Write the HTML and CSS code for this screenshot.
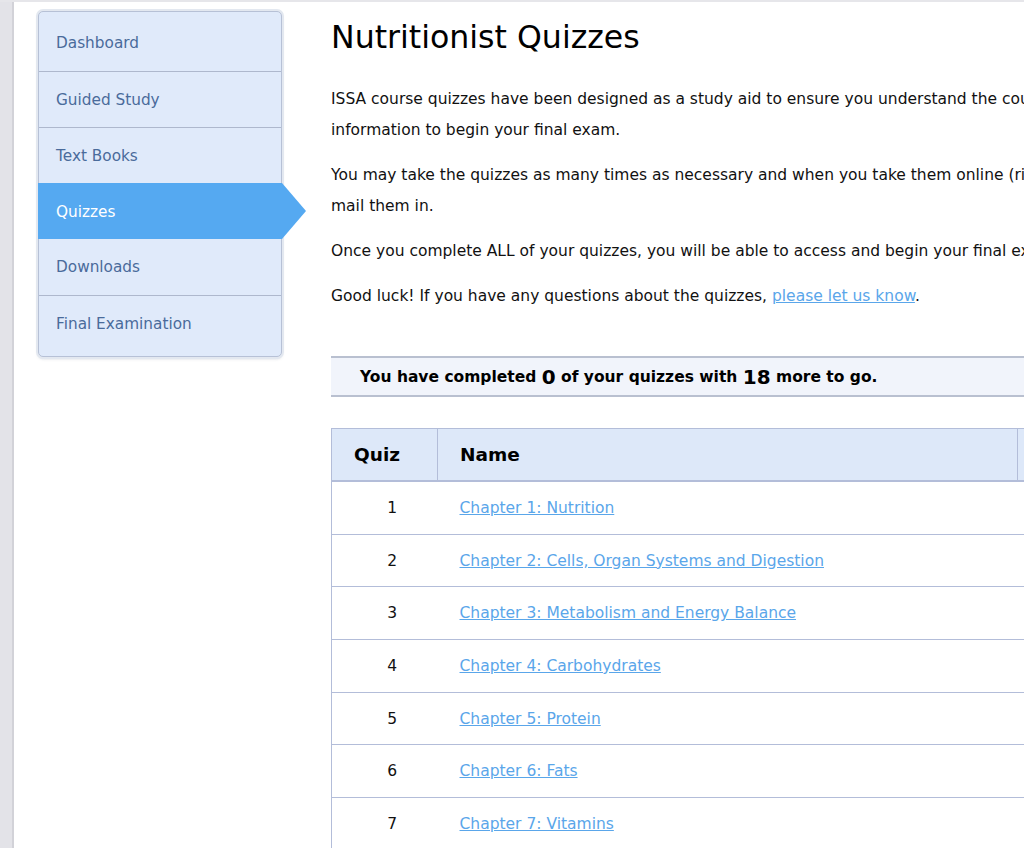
FILE: index.html
```html
<!DOCTYPE html>
<html lang="en">
<head>
<meta charset="utf-8">
<title>Nutritionist Quizzes</title>
<link rel="stylesheet" href="styles.css">
</head>
<body>
<div class="frame">
  <div class="gutter"></div>
  <div class="page">
    <nav class="sidebar">
      <a class="nav-item" href="#">Dashboard</a>
      <a class="nav-item" href="#">Guided Study</a>
      <a class="nav-item" href="#">Text Books</a>
      <a class="nav-item active" href="#">Quizzes</a>
      <a class="nav-item" href="#">Downloads</a>
      <a class="nav-item" href="#">Final Examination</a>
    </nav>
    <main class="main">
      <h1 class="title">Nutritionist Quizzes</h1>
      <p class="para">ISSA course quizzes have been designed as a study aid to ensure you understand the course material and are ready with the information to begin your final exam.</p>
      <p class="para">You may take the quizzes as many times as necessary and when you take them online (right here), you will not ever need to mail them in.</p>
      <p class="para">Once you complete ALL of your quizzes, you will be able to access and begin your final exam.</p>
      <p class="para">Good luck! If you have any questions about the quizzes, <a class="link" href="#">please let us know</a>.</p>
      <div class="summary">You have completed <span class="num">0</span> of your quizzes with <span class="num">18</span> more to go.</div>
      <table class="quiz-table">
        <thead>
          <tr><th class="col-quiz">Quiz</th><th class="col-name">Name</th><th class="col-extra">Status</th></tr>
        </thead>
        <tbody>
          <tr><td class="num-cell">1</td><td><a class="link" href="#">Chapter 1: Nutrition</a></td><td></td></tr>
          <tr><td class="num-cell">2</td><td><a class="link" href="#">Chapter 2: Cells, Organ Systems and Digestion</a></td><td></td></tr>
          <tr><td class="num-cell">3</td><td><a class="link" href="#">Chapter 3: Metabolism and Energy Balance</a></td><td></td></tr>
          <tr><td class="num-cell">4</td><td><a class="link" href="#">Chapter 4: Carbohydrates</a></td><td></td></tr>
          <tr><td class="num-cell">5</td><td><a class="link" href="#">Chapter 5: Protein</a></td><td></td></tr>
          <tr><td class="num-cell">6</td><td><a class="link" href="#">Chapter 6: Fats</a></td><td></td></tr>
          <tr><td class="num-cell">7</td><td><a class="link" href="#">Chapter 7: Vitamins</a></td><td></td></tr>
          <tr><td class="num-cell">8</td><td><a class="link" href="#">Chapter 8: Minerals</a></td><td></td></tr>
        </tbody>
      </table>
    </main>
  </div>
</div>
</body>
</html>
```
FILE: styles.css
```css
html, body {
  margin: 0;
  padding: 0;
  background: #ffffff;
  overflow: hidden;
  height: 848px;
}
body {
  font-family: "DejaVu Sans", Verdana, sans-serif;
  font-size: 15.5px;
  color: #111;
}
.frame {
  display: flex;
  border-top: 2px solid #e6e6ea;
  min-height: 846px;
}
.gutter {
  width: 12px;
  flex: none;
  background: #e3e3e8;
  border-right: 2px solid #d2d2d8;
}
.page {
  display: flex;
  align-items: flex-start;
  padding-left: 24px;
  padding-top: 9px;
}
.sidebar {
  width: 242px;
  flex: none;
  display: flex;
  flex-direction: column;
  background: #e0eafa;
  border: 1px solid #b7c1d6;
  border-radius: 5px;
  box-shadow: 0 0 0 2px #e3e8f0, 0 2px 3px rgba(120,130,150,0.3);
  padding: 3px 0 5px;
  font-size: 15.3px;
}
.nav-item {
  display: flex;
  align-items: center;
  height: 55px;
  padding-left: 17px;
  color: #4a6b9b;
  text-decoration: none;
  border-top: 1px solid #aeb8cd;
  position: relative;
}
.nav-item:first-child {
  border-top: none;
  height: 56px;
}
.nav-item.active {
  background: #55a9f1;
  color: #fff;
  border-top: 1px solid #55a9f1;
  margin: 0 -1px;
  padding-left: 18px;
}
.nav-item.active + .nav-item {
  border-top: none;
  height: 56px;
}
.nav-item.active::after {
  content: "";
  position: absolute;
  right: -24px;
  top: -1px;
  width: 24px;
  height: 56px;
  background: #55a9f1;
  clip-path: polygon(0 0, 0 100%, 100% 50%);
}
.main {
  margin-left: 49px;
  width: 1000px;
  flex: none;
}
.title {
  font-weight: normal;
  font-size: 31.6px;
  margin: 6px 0 27px;
  line-height: 40px;
  color: #000;
}
.para {
  margin: 0 0 14px;
  line-height: 31px;
}
.link {
  color: #5aa6ea;
  text-decoration: underline;
}
.summary {
  margin-top: 44px;
  width: 760px;
  box-sizing: border-box;
  background: #f1f4fb;
  border-top: 2px solid #b9c0d0;
  border-bottom: 2px solid #b9c0d0;
  height: 41px;
  display: flex;
  align-items: center;
  padding-left: 29px;
  font-weight: bold;
  white-space: pre;
  color: #000;
}
.summary .num {
  font-size: 20px;
}
.quiz-table {
  margin-top: 31px;
  border-collapse: collapse;
  table-layout: fixed;
  width: 760px;
  border: 1px solid #b3bdd9;
}
.quiz-table th {
  background: #dde8f9;
  height: 51px;
  text-align: left;
  font-size: 18.5px;
  font-weight: bold;
  color: #000;
  padding: 0 0 0 22px;
  border-right: 1px solid #b3bdd9;
  border-bottom: 2px solid #b3bdd9;
}
.quiz-table .col-quiz { width: 83px; }
.quiz-table .col-name { width: 557px; }
.quiz-table td {
  height: 51.7px;
  padding: 0 0 0 22px;
  border-bottom: 1px solid #b3bdd9;
}
.quiz-table td.num-cell {
  text-align: center;
  padding-left: 15px;
}
```
